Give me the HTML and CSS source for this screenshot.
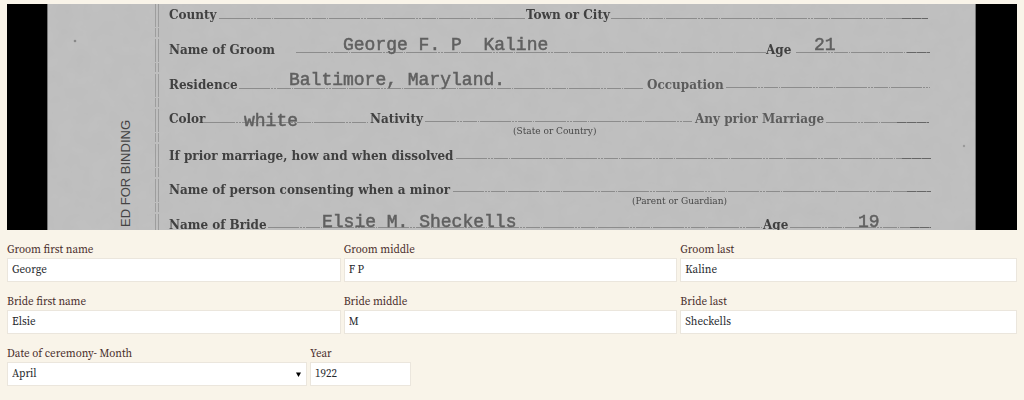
FILE: index.html
```html
<!DOCTYPE html>
<html lang="en">
<head>
<meta charset="utf-8">
<meta name="viewport" content="width=device-width, initial-scale=1">
<title>Marriage record transcription</title>
<link rel="stylesheet" href="styles.css">
</head>
<body>
<main class="page">
  <svg class="scan" viewBox="0 0 1010 226" role="img" aria-label="Scanned marriage record">
    <defs>
      <filter id="grain" x="0" y="0" width="100%" height="100%">
        <feTurbulence type="fractalNoise" baseFrequency="0.06" numOctaves="3" seed="4"/>
        <feColorMatrix values="0 0 0 0 0.45  0 0 0 0 0.45  0 0 0 0 0.45  0.35 0 0 0 -0.08"/>
      </filter>
      <filter id="ink" x="-5%" y="-20%" width="110%" height="140%">
        <feGaussianBlur stdDeviation="0.5"/>
      </filter>
    </defs>
    <rect width="1010" height="226" fill="#000"/>
    <rect x="40" width="929" height="226" fill="#c0c0c0"/>
    <rect x="40" width="929" height="226" filter="url(#grain)"/>
    <path d="M40.500 0V226M968.500 0V226" stroke="#777"/>
    <path d="M148.500 0V226M151.500 0V226" stroke="#929292" stroke-dasharray="23 1 9 2" opacity=".75"/>
    <circle cx="68" cy="37" r="1.300" fill="#888"/>
    <circle cx="957" cy="142" r="1.200" fill="#999"/>

    <g class="rules">
      <path d="M212 14.500H518M604 14.500H921"/>
      <path d="M289 48.500H759M789 48.500H923"/>
      <path d="M232 84.500H636M719 83.500H923"/>
      <path d="M197 118.500H361M418 117.500H685M819 118.500H922"/>
      <path d="M449 154.500H924"/>
      <path d="M446 187.500H924"/>
      <path d="M261 223.500H755M783 223.500H924"/>
    </g>
    <g class="rule-ends">
      <path d="M895 14.500H921M900 48.500H923M890 118.500H922M895 154.500H924M900 187.500H924M903 223.500H924"/>
    </g>

    <g class="printed" filter="url(#ink)">
      <text x="162" y="15">County</text>
      <text x="519" y="15">Town or City</text>
      <text x="162" y="50">Name of Groom</text>
      <text x="759" y="50">Age</text>
      <text x="162" y="85">Residence</text>
      <text class="faded" x="640" y="85">Occupation</text>
      <text x="162" y="119">Color</text>
      <text x="363" y="119">Nativity</text>
      <text class="faded" x="688" y="119">Any prior Marriage</text>
      <text x="162" y="156">If prior marriage, how and when dissolved</text>
      <text x="162" y="190">Name of person consenting when a minor</text>
      <text x="162" y="225">Name of Bride</text>
      <text x="756" y="225">Age</text>
    </g>
    <g class="note" filter="url(#ink)">
      <text x="506" y="130">(State or Country)</text>
      <text x="625" y="200">(Parent or Guardian)</text>
    </g>
    <g class="typed" filter="url(#ink)">
      <text x="336" y="46">George F. P&#160; Kaline</text>
      <text x="807" y="46">21</text>
      <text x="282" y="81">Baltimore, Maryland.</text>
      <text x="237" y="122">white</text>
      <text x="315" y="223">Elsie M. Sheckells</text>
      <text x="851" y="223">19</text>
    </g>
    <text class="binding" transform="translate(123 116) rotate(-90)">ED FOR BINDING</text>
  </svg>

  <form class="record">
    <div class="row thirds">
      <div class="field">
        <label for="groom-first">Groom first name</label>
        <input id="groom-first" type="text" value="George">
      </div>
      <div class="field">
        <label for="groom-middle">Groom middle</label>
        <input id="groom-middle" type="text" value="F P">
      </div>
      <div class="field">
        <label for="groom-last">Groom last</label>
        <input id="groom-last" type="text" value="Kaline">
      </div>
    </div>
    <div class="row thirds">
      <div class="field">
        <label for="bride-first">Bride first name</label>
        <input id="bride-first" type="text" value="Elsie">
      </div>
      <div class="field">
        <label for="bride-middle">Bride middle</label>
        <input id="bride-middle" type="text" value="M">
      </div>
      <div class="field">
        <label for="bride-last">Bride last</label>
        <input id="bride-last" type="text" value="Sheckells">
      </div>
    </div>
    <div class="row date">
      <div class="field">
        <label for="month">Date of ceremony- Month</label>
        <div class="select">
          <select id="month">
            <option>January</option>
            <option>February</option>
            <option>March</option>
            <option selected>April</option>
            <option>May</option>
            <option>June</option>
            <option>July</option>
            <option>August</option>
            <option>September</option>
            <option>October</option>
            <option>November</option>
            <option>December</option>
          </select>
          <svg class="arrow" viewBox="0 0 5 5" aria-hidden="true"><path d="M0 0.500H5L2.500 5Z"/></svg>
        </div>
      </div>
      <div class="field">
        <label for="year">Year</label>
        <input id="year" type="text" value="1922">
      </div>
    </div>
  </form>
</main>
</body>
</html>
```

FILE: styles.css
```css
* {
  box-sizing: border-box;
}

body {
  margin: 0;
  background: #f9f4e9;
  color: #4a2e2c;
  font-family: "Source Serif Pro", "Source Serif 4", "Liberation Serif", serif;
  font-size: 11px;
  line-height: 16px;
}

.page {
  padding: 4px 7px;
}

.scan {
  display: block;
  width: 100%;
  height: auto;
}

.rules path,
.rule-ends path {
  fill: none;
  stroke: #8c8c8c;
  stroke-width: 1;
  stroke-dasharray: 31 1 2 1 2 1 14 1 1 1;
}

.rule-ends path {
  stroke: #666;
  stroke-dasharray: 9 1;
}

.printed {
  font: bold 12px "DejaVu Serif", serif;
  fill: #404040;
}

.printed .faded {
  fill: #5c5c5c;
}

.note {
  font: 9px "DejaVu Serif", serif;
  fill: #484848;
}

.typed {
  font: 18px "Liberation Mono", monospace;
  fill: #606060;
  stroke: #606060;
  stroke-width: 0.5px;
}

.binding {
  font: 13px "Liberation Sans", sans-serif;
  text-anchor: end;
  fill: #444;
}

.row {
  display: grid;
  margin-top: 12px;
}

.thirds {
  grid-template-columns: repeat(3, 1fr);
}

.date {
  grid-template-columns: 3fr 1fr 6fr;
}

.field {
  min-width: 0;
  padding-right: 3px;
}

.field:last-child {
  padding-right: 0;
}

label {
  display: block;
}

input,
select {
  display: block;
  width: 100%;
  height: 24px;
  margin: 0;
  padding: 0 4px 1px;
  border: 1px solid #ebe6dd;
  border-radius: 0;
  background: #fff;
  color: #25282c;
  font: inherit;
  appearance: none;
}

.select {
  display: grid;
  align-items: center;
}

.select > * {
  grid-area: 1 / 1;
}

.arrow {
  width: 5px;
  height: 5px;
  margin-right: 6px;
  justify-self: end;
  pointer-events: none;
}
```
